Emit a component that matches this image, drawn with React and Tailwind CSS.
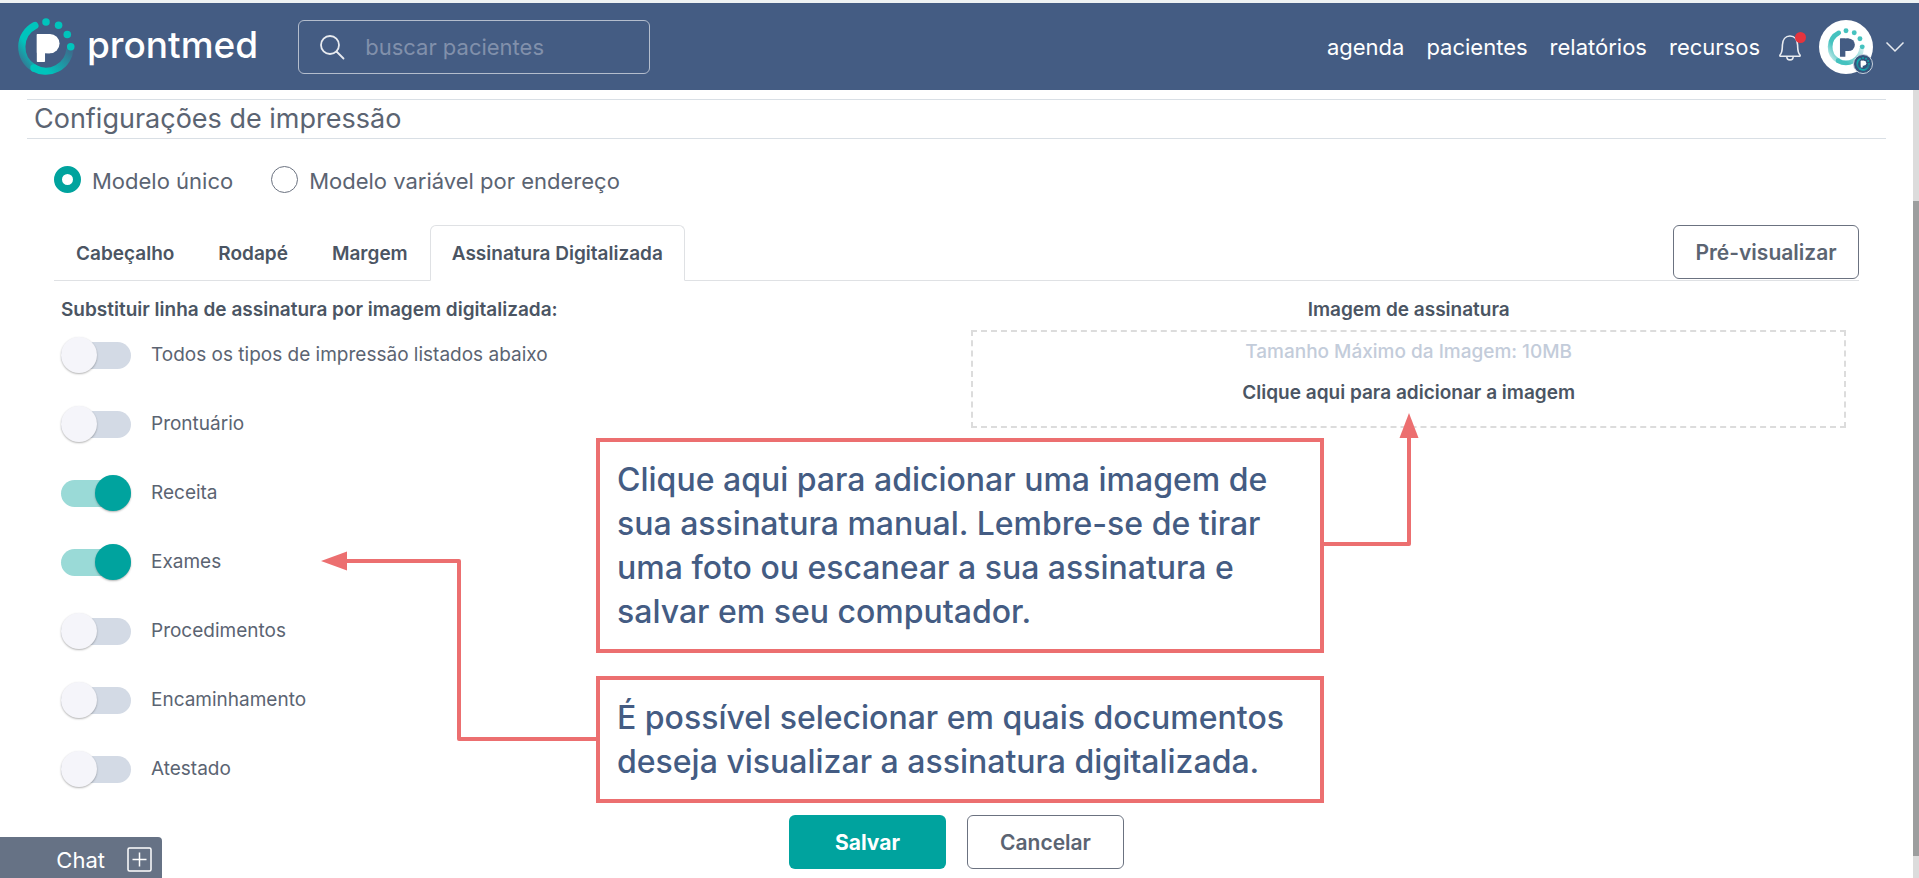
import React, { useState } from "react";

function ProntmedMark({ id, from, to, letter, className }) {
  return (
    <svg viewBox="0 0 60 60" className={className} aria-hidden="true">
      <defs>
        <linearGradient id={id + "a"} x1="0" y1="1" x2="0.4" y2="0">
          <stop offset="0" stopColor={to} />
          <stop offset="0.6" stopColor={from} />
        </linearGradient>
        <linearGradient id={id + "b"} x1="0" y1="0.6" x2="1" y2="0">
          <stop offset="0.1" stopColor={from} />
          <stop offset="1" stopColor={to} />
        </linearGradient>
      </defs>
      <g fill="none" strokeWidth="7.5">
        <path d="M17.5 51.7A25 25 0 0 1 18.5 7.8" stroke={"url(#" + id + "a)"} strokeLinecap="round" />
        <path d="M54.8 32A25 25 0 0 1 17.5 51.7" stroke={"url(#" + id + "b)"} />
      </g>
      <g fill={from}>
        <circle cx="17.5" cy="51.7" r="3.75" />
        <circle cx="30" cy="4.2" r="3.9" />
        <circle cx="43" cy="7.6" r="3.9" />
        <circle cx="52" cy="17" r="3.9" />
        <circle cx="55.6" cy="29.8" r="3.9" />
      </g>
      <g fill={letter}>
        <rect x="20.5" y="16.5" width="8.5" height="29" rx="0.8" />
        <rect x="20.5" y="16.5" width="14" height="20" rx="0.8" />
        <rect x="22" y="16.5" width="22" height="20" rx="10" />
      </g>
    </svg>
  );
}

function Header() {
  return (
    <header className="flex h-[90px] items-center border-t-[3px] border-[#eef2f3] bg-[#445c83] pl-[17px] pr-[14px] text-white">
      <a href="#inicio" className="flex items-center gap-3" aria-label="prontmed">
        <ProntmedMark id="logo" from="#00c4bc" to="#3d6a8c" letter="#ffffff" className="size-[58px]" />
        <span className="pb-1 text-[37px] leading-10 font-medium">prontmed</span>
      </a>
      <div className="ml-10 flex h-[54px] w-[352px] items-center gap-5 rounded-md border border-[#b4bdcd] pl-5">
        <svg viewBox="0 0 26 26" className="size-[26px] shrink-0" fill="none" stroke="#e8ebf0" strokeWidth="1.8" strokeLinecap="round" aria-hidden="true">
          <circle cx="11" cy="11" r="9" />
          <path d="M17.5 17.5L24.5 24.5" />
        </svg>
        <input
          type="search"
          aria-label="Buscar pacientes"
          placeholder="buscar pacientes"
          className="h-full w-full min-w-0 bg-transparent text-[22px] leading-7 outline-none placeholder:text-[#8190ab]"
        />
      </div>
      <nav className="ml-auto flex items-center gap-[22px] text-[22px] leading-7">
        <a href="#agenda">agenda</a>
        <a href="#pacientes">pacientes</a>
        <a href="#relatorios">relatórios</a>
        <a href="#recursos">recursos</a>
      </nav>
      <button type="button" aria-label="Notificações" className="relative ml-4">
        <svg viewBox="0 0 30 30" className="size-[30px]" fill="none" stroke="#e8ebf0" strokeWidth="1.6" strokeLinejoin="round" aria-hidden="true">
          <path d="M4 23C6.5 20.5 6.2 17.5 6.4 13C6.6 7.5 9.5 4 14 4C18.5 4 21.4 7.5 21.6 13C21.8 17.5 21.5 20.5 24 23C24.4 23.5 24 24.2 23.4 24.2H4.6C4 24.2 3.6 23.5 4 23Z" />
          <path d="M10.8 24.5C10.8 29 17.2 29 17.2 24.5" />
        </svg>
        <span className="absolute right-0 top-0 size-[11px] rounded-full bg-[#e5343d]" />
      </button>
      <button type="button" aria-label="Conta" className="ml-[13px] flex items-center gap-3">
        <span className="relative flex size-[54px] items-center justify-center rounded-full bg-white">
          <ProntmedMark id="avatar" from="#45c2bf" to="#d5f0ef" letter="#445c83" className="size-[38px]" />
          <span className="absolute bottom-0 right-0 flex size-5 items-center justify-center rounded-full border border-[#c9d1dd] bg-[#35557c]">
            <ProntmedMark id="badge" from="#12a7ab" to="#2d6e8c" letter="#ffffff" className="size-[14px]" />
          </span>
        </span>
        <svg viewBox="0 0 20 12" className="h-3 w-5" fill="none" stroke="#e8ebf0" strokeWidth="1.5" aria-hidden="true">
          <path d="M1.5 1.5L10 10L18.5 1.5" />
        </svg>
      </button>
    </header>
  );
}

function Radio({ label, checked, onChange }) {
  return (
    <label className="flex items-center gap-[11px]">
      <input
        type="radio"
        name="modelo"
        checked={checked}
        onChange={onChange}
        className="size-[27px] appearance-none rounded-full border border-[#6b7280] bg-white checked:border-[8px] checked:border-[#00a39e]"
      />
      <span className="pt-1">{label}</span>
    </label>
  );
}

function Toggle({ label, checked, onChange }) {
  return (
    <label className="flex items-center gap-5">
      <span className="relative flex h-9 w-[70px] items-center">
        <input
          type="checkbox"
          role="switch"
          checked={checked}
          onChange={onChange}
          className="peer h-[27px] w-[70px] appearance-none rounded-full bg-[#d3dae5] checked:bg-[#9adad7]"
        />
        <span className="pointer-events-none absolute left-0 top-0 size-9 rounded-full bg-[#f5f5fa] shadow-[0_1px_2px_rgba(0,0,0,0.3)] peer-checked:left-[34px] peer-checked:bg-[#00a39e]" />
      </span>
      {label}
    </label>
  );
}

const TABS = ["Cabeçalho", "Rodapé", "Margem", "Assinatura Digitalizada"];

const DOCUMENTS = [
  ["Todos os tipos de impressão listados abaixo", false],
  ["Prontuário", false],
  ["Receita", true],
  ["Exames", true],
  ["Procedimentos", false],
  ["Encaminhamento", false],
  ["Atestado", false],
];

function Callout({ className, children }) {
  return (
    <p className={"absolute left-[276px] w-[728px] border-4 border-[#ec6f70] bg-white px-[17px] pt-4 text-[32px] leading-[44px] font-medium whitespace-nowrap text-[#445c83] " + className}>
      {children}
    </p>
  );
}

export default function App() {
  const [model, setModel] = useState(0);
  const [tab, setTab] = useState(3);
  const [docs, setDocs] = useState(DOCUMENTS.map((d) => d[1]));

  return (
    <div className="relative flex min-h-screen flex-col overflow-hidden bg-white font-['Inter','Liberation_Sans',sans-serif] text-[#5b6472]">
      <Header />
      <div className="flex grow">
        <main className="flex grow flex-col px-[27px] pt-[9px]">
          <h1 className="border-y border-[#d9dfe5] pl-[7px] text-[27px] leading-[38px]">Configurações de impressão</h1>
          <div className="flex grow flex-col px-[27px]">
            <div className="mt-[24px] flex items-center gap-[38px] text-[22px] leading-7">
              <Radio label="Modelo único" checked={model === 0} onChange={() => setModel(0)} />
              <Radio label="Modelo variável por endereço" checked={model === 1} onChange={() => setModel(1)} />
            </div>
            <div className="mt-[30px] flex items-end justify-between border-b border-[#dfe1e4]">
              <div role="tablist" className="-mb-px flex text-[19px] leading-6 font-semibold text-[#4b5563]">
                {TABS.map((name, i) => (
                  <button
                    key={name}
                    type="button"
                    role="tab"
                    aria-selected={tab === i}
                    onClick={() => setTab(i)}
                    className={
                      "h-14 rounded-t-md border px-[21px] pt-0.5 " +
                      (tab === i ? "border-[#dfe1e4] border-b-white bg-white" : "border-transparent border-b-[#dfe1e4]")
                    }
                  >
                    {name}
                  </button>
                ))}
              </div>
              <button type="button" className="mb-px h-[54px] w-[186px] rounded-md border border-[#6b7280] pt-0.5 text-[21px] leading-7 font-semibold">
                Pré-visualizar
              </button>
            </div>
            <div className="flex justify-between pl-[7px] pr-[13px] pt-[17px]">
              <section>
                <h2 className="text-[19px] leading-6 font-semibold text-[#4b5563]">
                  Substituir linha de assinatura por imagem digitalizada:
                </h2>
                <div className="mt-[15px] flex flex-col items-start gap-[33px] text-[19px] leading-6">
                  {DOCUMENTS.map(([name], i) => (
                    <Toggle
                      key={name}
                      label={name}
                      checked={docs[i]}
                      onChange={() => setDocs(docs.map((v, j) => (j === i ? !v : v)))}
                    />
                  ))}
                </div>
              </section>
              <section className="w-[49%] text-center text-[19px] leading-6">
                <h2 className="font-semibold text-[#4b5563]">Imagem de assinatura</h2>
                <button type="button" className="mt-2 flex h-[98px] w-full flex-col items-center gap-[17px] border-2 border-dashed border-[#dcdcdc] pt-2">
                  <span className="font-medium text-[#c3ccda]">Tamanho Máximo da Imagem: 10MB</span>
                  <span className="font-semibold text-[#4b5563]">Clique aqui para adicionar a imagem</span>
                </button>
              </section>
            </div>
            <div className="mt-auto flex justify-center gap-[21px] pb-[9px] text-[21px] leading-7 font-semibold">
              <button type="button" className="h-[54px] w-[157px] rounded-md bg-[#00a39e] pt-0.5 font-bold text-white">Salvar</button>
              <button type="button" className="h-[54px] w-[157px] rounded-md border border-[#6b7280] pt-0.5">Cancelar</button>
            </div>
          </div>
        </main>
        <div className="flex w-[6px] flex-col bg-[#dcdcdc] pt-[111px] pb-[22px]">
          <div className="grow bg-[#9c9e9e]" />
        </div>
      </div>

      <button type="button" className="absolute bottom-0 left-0 flex h-[41px] w-[162px] items-center justify-end gap-[22px] rounded-tr-sm bg-[#667285] pr-[10px] pt-1 text-[22px] leading-7 text-white">
        Chat
        <svg viewBox="0 0 25 25" className="size-[25px]" fill="none" stroke="#ffffff" strokeWidth="1.5" aria-hidden="true">
          <rect x="1" y="1" width="23" height="23" rx="1.5" />
          <path d="M12.5 5.5V19.5M5.5 12.5H19.5" />
        </svg>
      </button>

      <aside className="pointer-events-none absolute left-[320px] top-[410px] h-[400px] w-[1110px]">
        <svg viewBox="0 0 1110 400" className="absolute inset-0" fill="none" stroke="#ec6f70" strokeWidth="4" strokeLinejoin="round" aria-hidden="true">
          <path d="M278 329H139V151H24" />
          <path d="M1002 134H1089V26" />
          <path d="M1 151L27 141.5V160.5Z" fill="#ec6f70" stroke="none" />
          <path d="M1089 3L1079.5 28H1098.5Z" fill="#ec6f70" stroke="none" />
        </svg>
        <Callout className="top-7 h-[215px]">
          Clique aqui para adicionar uma imagem de
          <br />
          sua assinatura manual. Lembre-se de tirar
          <br />
          uma foto ou escanear a sua assinatura e
          <br />
          salvar em seu computador.
        </Callout>
        <Callout className="top-[266px] h-[127px]">
          É possível selecionar em quais documentos
          <br />
          deseja visualizar a assinatura digitalizada.
        </Callout>
      </aside>
    </div>
  );
}
